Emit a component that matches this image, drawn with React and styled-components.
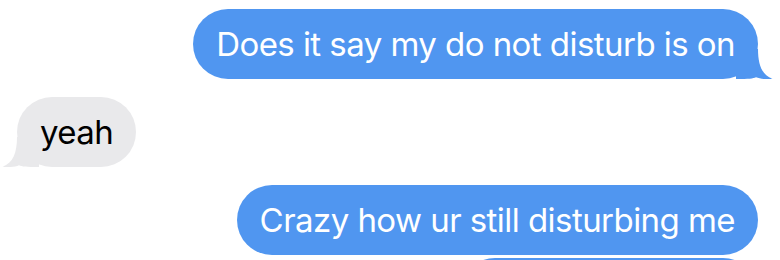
import React from "react";
import styled, { createGlobalStyle } from "styled-components";

const GlobalStyle = createGlobalStyle`
	html, body {
		margin: 0;
		padding: 0;
		background: #ffffff;
		height: 260px;
		overflow: hidden;
	}
	body {
		font-family: Inter, "Noto Sans", sans-serif;
	}
`;

const messages = [
	{ id: 1, out: true, tail: true, text: "Does it say my do not disturb is on" },
	{ id: 2, out: false, tail: true, text: "yeah" },
	{ id: 3, out: true, tail: false, text: "Crazy how ur still disturbing me" },
	{ id: 4, out: true, tail: false, text: "", width: 298 },
];

const Tail = ({ out }) => (
	<TailSvg $out={out} viewBox="-10 0 37 30" width="37" height="30">
		<path d="M-10,0 H12 C12,16 16,26 26.5,29.8 C20,30.6 14,29.8 10,28.2 C7,29.5 3,30 -10,30 Z" />
	</TailSvg>
);

const App = () => {
	return (
		<>
			<GlobalStyle />
			<Thread>
				{messages.map((m, i) => (
					<Row key={m.id} $out={m.out} $tight={i > 0 && !messages[i - 1].tail}>
						<Bubble $out={m.out} style={m.width ? { width: m.width } : undefined}>
							{m.text}
							{m.tail && <Tail out={m.out} />}
						</Bubble>
					</Row>
				))}
			</Thread>
		</>
	);
};

const Thread = styled.div`
	display: flex;
	flex-direction: column;
	padding: 9px 22px 0 17px;
`;

const Row = styled.div`
	display: flex;
	justify-content: ${(p) => (p.$out ? "flex-end" : "flex-start")};
	margin-top: ${(p) => (p.$tight ? "3px" : "18px")};
	&:first-child {
		margin-top: 0;
	}
`;

const Bubble = styled.div`
	position: relative;
	box-sizing: border-box;
	height: 70px;
	padding: 0 23px;
	border-radius: 35px;
	display: flex;
	align-items: center;
	font-size: 33px;
	letter-spacing: -0.55px;
	white-space: nowrap;
	background: ${(p) => (p.$out ? "#5096f0" : "#e9e9eb")};
	color: ${(p) => (p.$out ? "#ffffff" : "#000000")};
	path {
		fill: ${(p) => (p.$out ? "#5096f0" : "#e9e9eb")};
	}
`;

const TailSvg = styled.svg`
	position: absolute;
	bottom: 0;
	${(p) => (p.$out ? "right: -15px;" : "left: -15px; transform: scaleX(-1);")}
`;

export default App;
